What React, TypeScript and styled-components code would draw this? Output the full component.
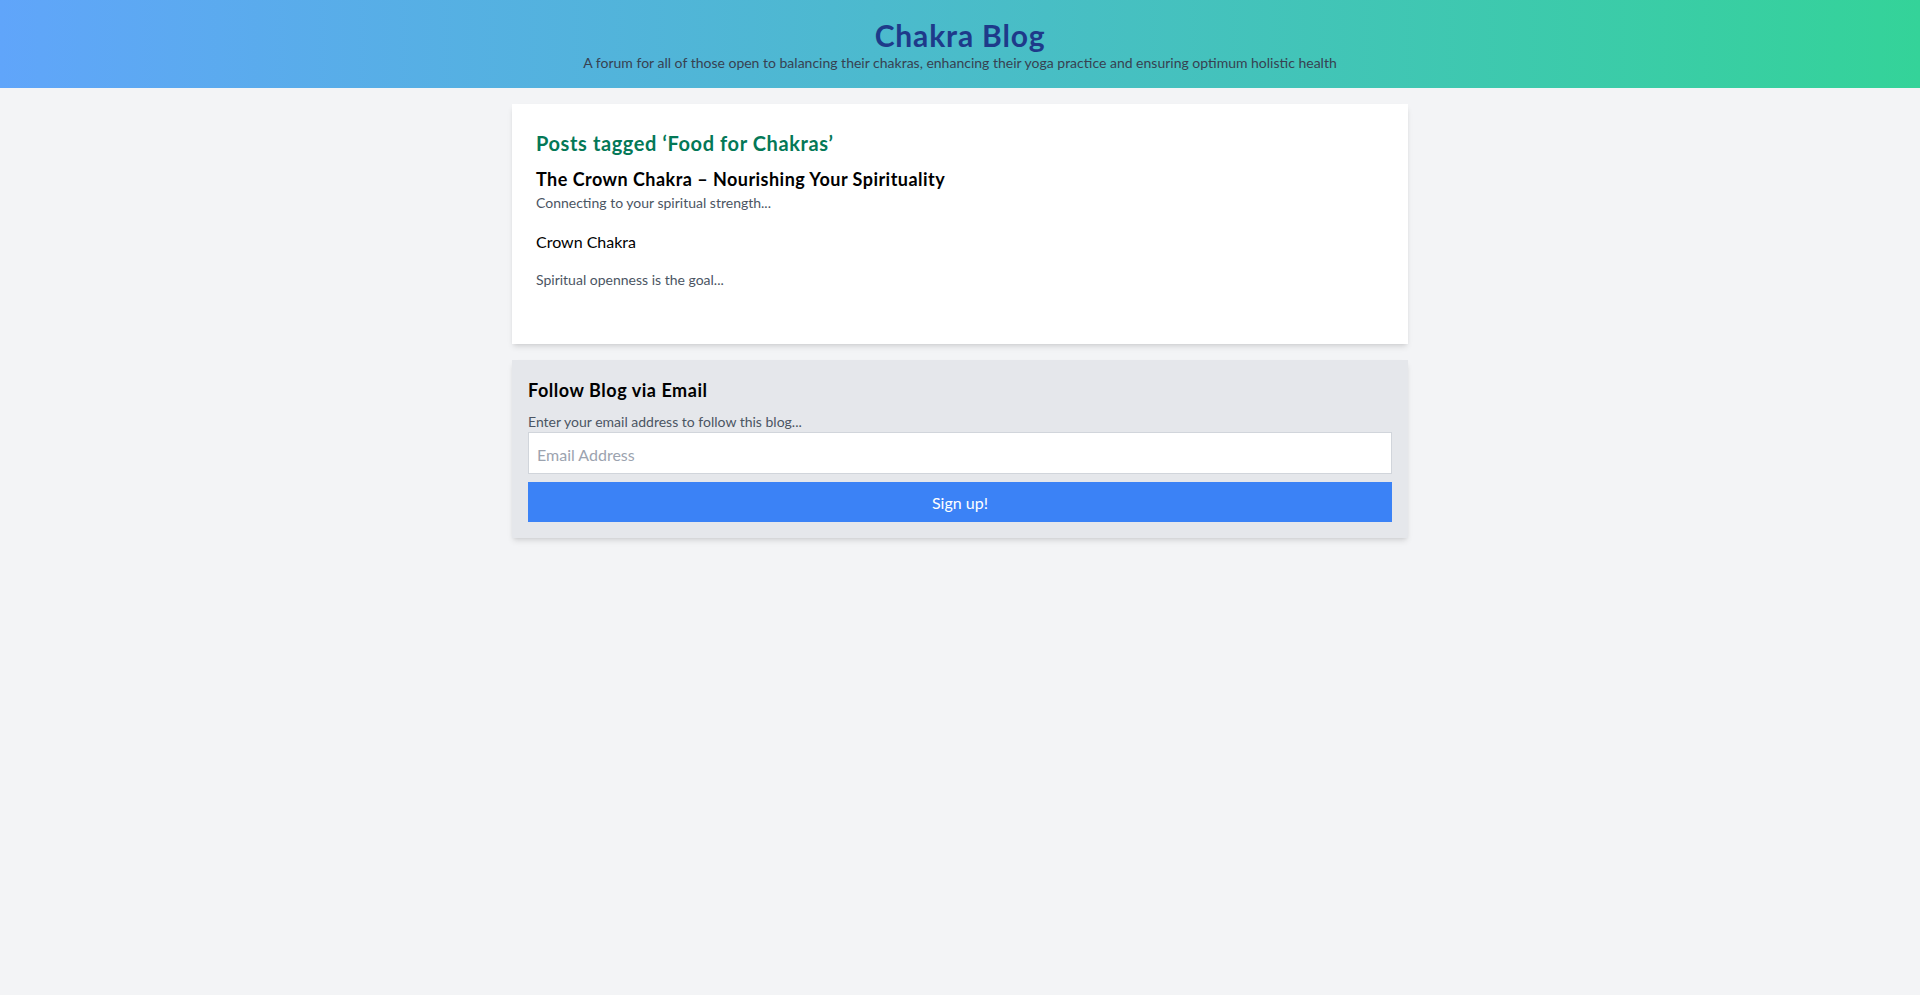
import React from "react";
import styled, { createGlobalStyle } from "styled-components";

const Global = createGlobalStyle`
  html, body { margin: 0; padding: 0; }
  body {
    background: #f3f4f6;
    font-family: Lato, "Noto Sans", "Liberation Sans", sans-serif;
    color: #111827;
    min-height: 995px;
  }
  * { box-sizing: border-box; }
`;

const Header = styled.header`
  background: linear-gradient(to right, #60a5fa, #34d399);
  padding: 17px 0 15px;
  text-align: center;
`;

const SiteTitle = styled.h1`
  margin: 0;
  font-size: 30px;
  line-height: 36px;
  font-weight: 700;
  letter-spacing: 0.028em;
  color: #1e3a8a;
`;

const Tagline = styled.p`
  margin: 0;
  font-size: 14px;
  line-height: 20px;
  color: #374151;
`;

const Main = styled.main`
  width: 896px;
  margin: 0 auto;
  padding-top: 16px;
  display: flex;
  flex-direction: column;
  gap: 16px;
`;

const Card = styled.section<{ $tone?: "white" | "gray" }>`
  background: ${(p) => (p.$tone === "gray" ? "#e5e7eb" : "#ffffff")};
  box-shadow: 0 4px 6px -1px rgba(0, 0, 0, 0.1), 0 2px 4px -2px rgba(0, 0, 0, 0.1);
  padding: ${(p) => (p.$tone === "gray" ? "16px" : "25px 24px 54px")};
`;

const TagHeading = styled.h2`
  margin: 0 0 8px;
  font-size: 20px;
  line-height: 28px;
  font-weight: 700;
  letter-spacing: 0.03em;
  color: #047857;
`;

const PostTitle = styled.h3`
  margin: 0;
  font-size: 18px;
  line-height: 28px;
  font-weight: 700;
  letter-spacing: 0.026em;
  color: #000;
`;

const Excerpt = styled.p<{ $gap?: number }>`
  margin: ${(p) => p.$gap ?? 0}px 0 0;
  font-size: 14px;
  line-height: 20px;
  color: #4b5563;
`;

const SubTitle = styled.h4`
  margin: 17px 0 0;
  font-size: 16px;
  line-height: 24px;
  font-weight: 400;
  color: #000;
`;

const WidgetTitle = styled.h3`
  margin: 0 0 8px;
  font-size: 18px;
  line-height: 28px;
  font-weight: 700;
  letter-spacing: 0.03em;
  color: #000;
`;

const Label = styled.p`
  margin: 0;
  font-size: 14px;
  line-height: 20px;
  color: #4b5563;
`;

const EmailInput = styled.input`
  display: block;
  width: 100%;
  height: 42px;
  padding: 9px 8px 7px;
  border: 1px solid #d1d5db;
  background: #fff;
  font-family: inherit;
  font-size: 16px;
  line-height: 24px;
  outline: none;
  &::placeholder { color: #9ca3af; }
`;

const SubmitButton = styled.button`
  display: block;
  width: 100%;
  height: 40px;
  margin-top: 8px;
  padding: 2px 0 0;
  border: none;
  background: #3b82f6;
  color: #fff;
  font-family: inherit;
  font-size: 16px;
  line-height: 24px;
  cursor: pointer;
`;

export default function App() {
  return (
    <>
      <Global />
      <Header>
        <SiteTitle>Chakra Blog</SiteTitle>
        <Tagline>
          A forum for all of those open to balancing their chakras, enhancing their yoga practice and ensuring optimum holistic health
        </Tagline>
      </Header>
      <Main>
        <Card $tone="white">
          <TagHeading>Posts tagged ‘Food for Chakras’</TagHeading>
          <PostTitle>The Crown Chakra – Nourishing Your Spirituality</PostTitle>
          <Excerpt>Connecting to your spiritual strength...</Excerpt>
          <SubTitle>Crown Chakra</SubTitle>
          <Excerpt $gap={16}>Spiritual openness is the goal...</Excerpt>
        </Card>
        <Card $tone="gray">
          <WidgetTitle>Follow Blog via Email</WidgetTitle>
          <Label>Enter your email address to follow this blog...</Label>
          <EmailInput type="email" placeholder="Email Address" />
          <SubmitButton>Sign up!</SubmitButton>
        </Card>
      </Main>
    </>
  );
}
